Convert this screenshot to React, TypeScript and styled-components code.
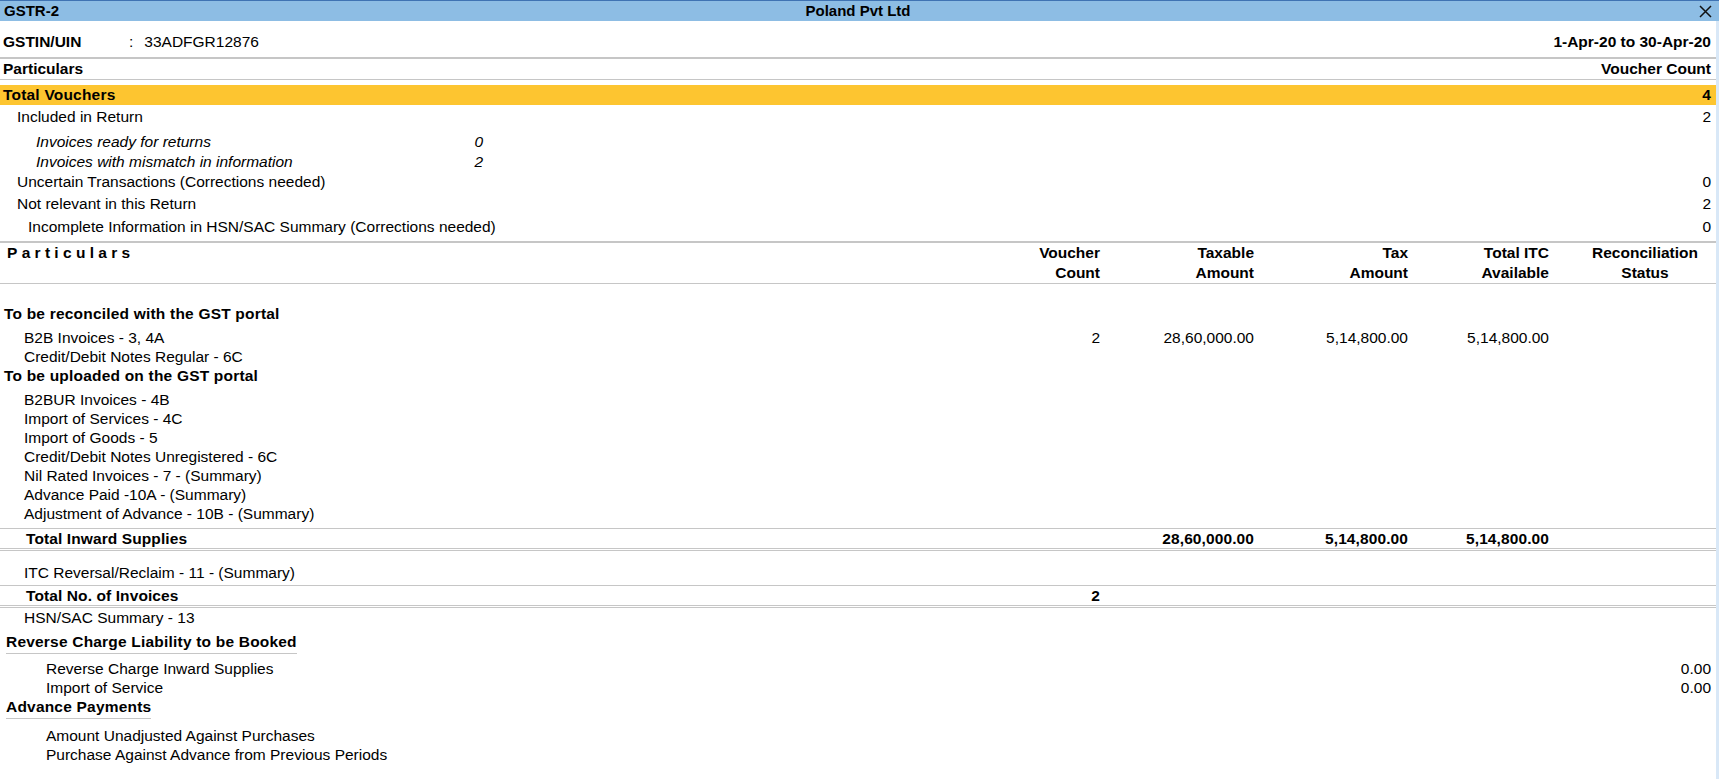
import styled, { createGlobalStyle } from 'styled-components';

const GlobalStyle = createGlobalStyle`
  html, body {
    margin: 0;
    padding: 0;
    background: #fff;
  }
  body {
    font-family: 'Liberation Sans', Arial, sans-serif;
    font-size: 15.5px;
    color: #000;
  }
`;

type Amounts = [string, string, string, string];

const toReconcile: { label: string; values?: Amounts }[] = [
  { label: 'B2B Invoices - 3, 4A', values: ['2', '28,60,000.00', '5,14,800.00', '5,14,800.00'] },
  { label: 'Credit/Debit Notes Regular - 6C' },
];

const toUpload = [
  'B2BUR Invoices - 4B',
  'Import of Services - 4C',
  'Import of Goods - 5',
  'Credit/Debit Notes Unregistered - 6C',
  'Nil Rated Invoices - 7 - (Summary)',
  'Advance Paid -10A - (Summary)',
  'Adjustment of Advance - 10B - (Summary)',
];

const App = () => {
  return (
    <>
      <GlobalStyle />
      <Window>
        <TitleBar>
          <span>GSTR-2</span>
          <span>Poland Pvt Ltd</span>
          <CloseButton>
            <svg width="13" height="13" viewBox="0 0 13 13">
              <path d="M1 1 L12 12 M12 1 L1 12" stroke="#111" strokeWidth="1.5" fill="none" />
            </svg>
          </CloseButton>
        </TitleBar>

        <Body>
          <InfoBar>
            <div>
              <InfoLabel>GSTIN/UIN</InfoLabel>
              <Colon>:</Colon>
              <span>33ADFGR12876</span>
            </div>
            <strong>1-Apr-20 to 30-Apr-20</strong>
          </InfoBar>

          <ColumnBar>
            <span>Particulars</span>
            <span>Voucher Count</span>
          </ColumnBar>

          <HighlightBar>
            <span>Total Vouchers</span>
            <span>4</span>
          </HighlightBar>

          <SummaryRow $indent={17} $gap={2}>
            <span>Included in Return</span>
            <span>2</span>
          </SummaryRow>
          <SubRow $gap={5}>
            <span>Invoices ready for returns</span>
            <span>0</span>
          </SubRow>
          <SubRow>
            <span>Invoices with mismatch in information</span>
            <span>2</span>
          </SubRow>
          <SummaryRow $indent={17}>
            <span>Uncertain Transactions (Corrections needed)</span>
            <span>0</span>
          </SummaryRow>
          <SummaryRow $indent={17} $gap={2}>
            <span>Not relevant in this Return</span>
            <span>2</span>
          </SummaryRow>
          <SummaryRow $indent={28} $gap={3}>
            <span>Incomplete Information in HSN/SAC Summary (Corrections needed)</span>
            <span>0</span>
          </SummaryRow>

          <TableHead>
            <HeadTitle>Particulars</HeadTitle>
            <HeadCell>Voucher<br />Count</HeadCell>
            <HeadCell>Taxable<br />Amount</HeadCell>
            <HeadCell>Tax<br />Amount</HeadCell>
            <HeadCell>Total ITC<br />Available</HeadCell>
            <HeadCell $center>Reconciliation<br />Status</HeadCell>
          </TableHead>

          <TableBody>
            <SectionTitle>To be reconciled with the GST portal</SectionTitle>
            <Group>
              {toReconcile.map(row => (
                <GridRow key={row.label}>
                  <Label $indent={24}>{row.label}</Label>
                  {(row.values ?? ['', '', '', '']).map((v, i) => <Num key={i}>{v}</Num>)}
                  <Num />
                </GridRow>
              ))}
            </Group>

            <SectionTitle>To be uploaded on the GST portal</SectionTitle>
            <Group>
              {toUpload.map(label => (
                <GridRow key={label}>
                  <Label $indent={24}>{label}</Label>
                </GridRow>
              ))}
            </Group>

            <TotalRow $gap={5}>
              <Label $indent={26}>Total Inward Supplies</Label>
              <Num />
              <Num>28,60,000.00</Num>
              <Num>5,14,800.00</Num>
              <Num>5,14,800.00</Num>
              <Num />
            </TotalRow>

            <GridRow $gap={12}>
              <Label $indent={24}>ITC Reversal/Reclaim - 11 - (Summary)</Label>
            </GridRow>

            <TotalRow $gap={3}>
              <Label $indent={26}>Total No. of Invoices</Label>
              <Num>2</Num>
            </TotalRow>

            <GridRow>
              <Label $indent={24}>HSN/SAC Summary - 13</Label>
            </GridRow>

            <Heading $gap={5}>Reverse Charge Liability to be Booked</Heading>
            <Group $gap={5}>
              <PlainRow>
                <span>Reverse Charge Inward Supplies</span>
                <span>0.00</span>
              </PlainRow>
              <PlainRow>
                <span>Import of Service</span>
                <span>0.00</span>
              </PlainRow>
            </Group>

            <Heading>Advance Payments</Heading>
            <Group $gap={7}>
              <PlainRow>
                <span>Amount Unadjusted Against Purchases</span>
              </PlainRow>
              <PlainRow>
                <span>Purchase Against Advance from Previous Periods</span>
              </PlainRow>
            </Group>
          </TableBody>
        </Body>
      </Window>
    </>
  );
};

const Window = styled.div`
  width: 1719px;
  height: 779px;
  overflow: hidden;
  display: flex;
  flex-direction: column;
  background: #fff;
`;

const TitleBar = styled.div`
  height: 20px;
  border-top: 1px solid #3f73b3;
  background: #8dbde4;
  display: grid;
  grid-template-columns: 1fr auto 1fr;
  align-items: center;
  padding: 0 7px 0 4px;
  font-size: 15px;
  font-weight: 700;
  line-height: 20px;
`;

const CloseButton = styled.span`
  justify-self: end;
  display: flex;
  align-items: center;
`;

const Body = styled.div`
  flex: 1;
  border-right: 3px solid #d9e8f7;
`;

const InfoBar = styled.div`
  display: flex;
  justify-content: space-between;
  padding: 11px 5px 5px 3px;
  line-height: 20px;
  border-bottom: 2px solid #c6c6c6;
`;

const InfoLabel = styled.strong`
  display: inline-block;
  width: 126px;
`;

const Colon = styled.span`
  margin-right: 11px;
`;

const ColumnBar = styled.div`
  display: flex;
  justify-content: space-between;
  padding: 0 5px 0 3px;
  line-height: 20px;
  font-weight: 700;
  border-bottom: 1px solid #c6c6c6;
`;

const HighlightBar = styled(ColumnBar)`
  margin-top: 5px;
  background: #fdc530;
  border-bottom: none;
  letter-spacing: 0.2px;
`;

type RowProps = { $indent?: number; $gap?: number };

const SummaryRow = styled.div<RowProps>`
  display: flex;
  justify-content: space-between;
  margin-top: ${({ $gap }) => $gap ?? 0}px;
  padding: 0 5px 0 ${({ $indent }) => $indent ?? 0}px;
  line-height: 20px;
`;

const SubRow = styled.div<RowProps>`
  display: flex;
  justify-content: space-between;
  box-sizing: border-box;
  width: 483px;
  margin-top: ${({ $gap }) => $gap ?? 0}px;
  padding-left: 36px;
  line-height: 20px;
  font-style: italic;
`;

const columns = '1fr 100px 154px 154px 141px 167px';

const TableHead = styled.div`
  display: grid;
  grid-template-columns: ${columns};
  margin-top: 4px;
  border-top: 2px solid #c6c6c6;
  border-bottom: 1px solid #c6c6c6;
  line-height: 20px;
  font-weight: 700;
`;

const HeadTitle = styled.div`
  padding-left: 7px;
  letter-spacing: 4.3px;
`;

const HeadCell = styled.div<{ $center?: boolean }>`
  text-align: ${({ $center }) => ($center ? 'center' : 'right')};
  padding-left: ${({ $center }) => ($center ? '25px' : '0')};
`;

const TableBody = styled.div`
  padding-top: 20px;
  line-height: 19px;
`;

const SectionTitle = styled.div`
  padding-left: 4px;
  font-weight: 700;
  letter-spacing: 0.2px;
`;

const Group = styled.div<{ $gap?: number }>`
  padding-top: ${({ $gap }) => $gap ?? 5}px;
`;

const GridRow = styled.div<{ $gap?: number }>`
  display: grid;
  grid-template-columns: ${columns};
  margin-top: ${({ $gap }) => $gap ?? 0}px;
  height: 19px;
`;

const TotalRow = styled(GridRow)`
  border-top: 1px solid #c6c6c6;
  border-bottom: 3px double #c6c6c6;
  font-weight: 700;
  letter-spacing: 0.1px;
`;

const Label = styled.div<{ $indent: number }>`
  padding-left: ${({ $indent }) => $indent}px;
  white-space: nowrap;
`;

const Num = styled.div`
  text-align: right;
`;

const Heading = styled.div<{ $gap?: number }>`
  display: table;
  margin: ${({ $gap }) => $gap ?? 0}px 0 0 6px;
  padding-bottom: 2px;
  border-bottom: 1px solid #c6c6c6;
  font-weight: 700;
  letter-spacing: 0.2px;
`;

const PlainRow = styled.div`
  display: flex;
  justify-content: space-between;
  padding: 0 5px 0 46px;
`;

export default App;
